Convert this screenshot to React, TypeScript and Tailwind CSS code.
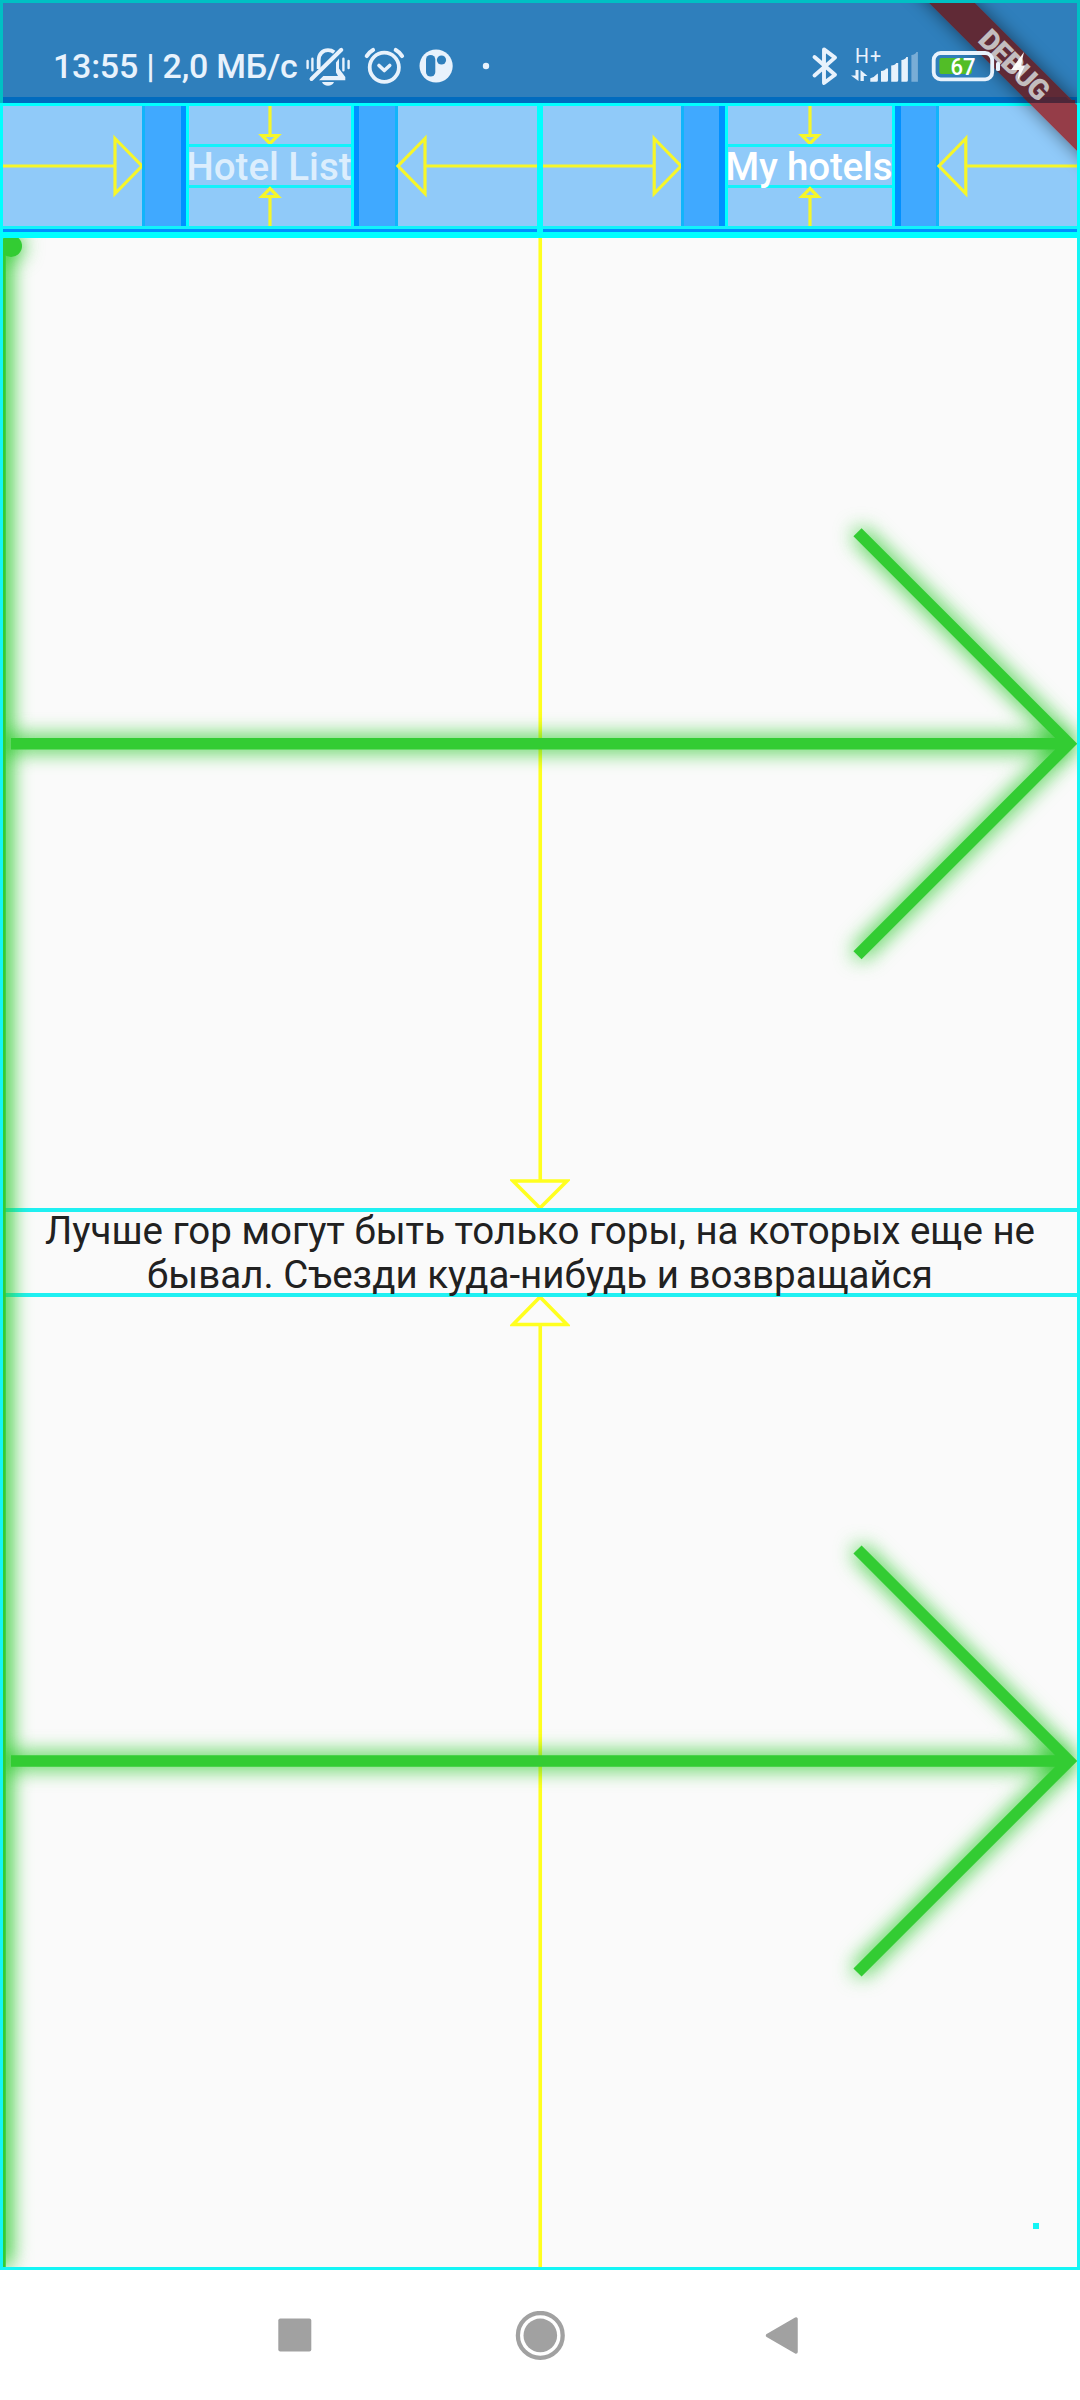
import React from "react";

function StatusIcons() {
  return (
    <svg className="h-[60px] w-[200px]" viewBox="300 36 200 60" fill="none" stroke="#e8f2fc">
      {/* muted bell */}
      <path d="M318.700 69V60c0-6 4-9.800 9.300-9.800 2.500 0 4.500.7 6.200 2" strokeWidth="3.800" />
      <path d="M311.500 79 341.300 49.800" strokeWidth="4" strokeLinecap="round" />
      <path d="M336 62.500 339 58.500v10l6.300 8.500v3.200H319l4.300-4.300H338l-2-3.500z" fill="#e8f2fc" stroke="none" />
      <path d="M307.600 61v7M312.400 58.800v11.400M343.400 58.800v11.400M348.600 61v7" strokeWidth="2.400" strokeLinecap="round" />
      <path d="M322 82h12c-1 2.500-3.300 3.800-6 3.800s-5-1.300-6-3.800z" fill="#e8f2fc" stroke="none" />
      {/* alarm */}
      <circle cx="384.300" cy="67.300" r="14.600" strokeWidth="3.800" />
      <path d="m379 65.500 5.300 5 5.400-5" strokeWidth="3.600" strokeLinecap="round" strokeLinejoin="round" />
      <path d="M366.800 56c1.500-2.500 3.500-4.500 6.200-6M395.800 50c2.700 1.500 4.700 3.500 6.200 6" strokeWidth="4.200" strokeLinecap="round" />
      {/* app badge */}
      <circle cx="436.100" cy="66" r="16.600" fill="#e8f2fc" stroke="none" />
      <rect x="426" y="55" width="9.300" height="21.500" rx="4.600" fill="#2f7fbc" stroke="none" />
      <circle cx="441.500" cy="60" r="4.600" fill="#2f7fbc" stroke="none" />
      <circle cx="486" cy="66" r="3.200" fill="#e8f2fc" stroke="none" />
    </svg>
  );
}

function SystemIcons() {
  return (
    <svg className="h-[60px] w-[220px]" viewBox="808 36 220 60" fill="none" stroke="#e8f2fc">
      <path d="m814.500 57 20.500 17.800-11 8.200V49.400l11 8.200L814.500 75.500" strokeWidth="3.900" strokeLinejoin="round" strokeLinecap="round" />
      <g fill="#e8f2fc" stroke="none">
        <text x="855" y="62.500" fontSize="19.500" fontFamily="Roboto, sans-serif" textLength="26">H+</text>
        <path d="M855.500 70h3v11l-7.500-5.500h4.500zM860.500 81V70l7 6h-3.700v5z" />
        <path d="M870.300 81.800v-3.500q4-1 7-4.600h.6v6.500q0 1.600-1.600 1.600zM881 81.800V71q4-.5 5-2.500h2v11.700q0 1.600-1.600 1.600zM891.200 81.800V65.500q4-.5 5-2.500h2v17.200q0 1.600-1.600 1.600zM901.400 81.800V60q4-.5 5-3h1.500v23.200q0 1.600-1.600 1.600z" />
        <path opacity=".4" d="M911.400 81.800V55q4-.5 5-3h1.500v29.800z" />
        <rect x="939.400" y="58" width="32.400" height="16" rx="2" fill="#52bd27" />
        <text x="950.500" y="75" fontSize="23" fontWeight="500" fontFamily="Roboto, sans-serif" textLength="25" lengthAdjust="spacingAndGlyphs" fill="#fff">67</text>
        <rect x="996" y="62" width="4" height="9" rx="1.500" />
        <path fill="#fff" d="m1024 52-13 18h8l-1.500 11 7.500-15.500h-4z" opacity=".95" />
      </g>
      <rect x="933.700" y="53" width="58.500" height="26.300" rx="7" strokeWidth="3.800" />
    </svg>
  );
}

function StatusBar() {
  return (
    <header className="relative h-[103px] border-x-[3px] border-t-[3px] border-[#00c0c4] bg-[#2f7fbc]">
      <div className="flex h-[94px] pl-[50px] pt-[33px]">
        <span className="mt-[10px] h-[40px] w-[247px] whitespace-nowrap font-['Roboto'] text-[34px] leading-[40px] font-medium tracking-[-0.25px] text-[#e8f2fc]">
          13:55 | 2,0 МБ/с
        </span>
        <StatusIcons />
      </div>
      <div className="h-[6px] bg-[#006bbf]" />
    </header>
  );
}

function ArrowCell({ flip = false }: { flip?: boolean }) {
  return (
    <div className="min-w-0 flex-1 bg-[#90caf9]">
      <svg className="h-[120px] w-full overflow-visible" viewBox="0 0 139 120" preserveAspectRatio="none" fill="none" stroke="#f6f62a" strokeWidth="3.200">
        <g transform={flip ? "translate(139 0) scale(-1 1)" : undefined}>
          <path d="M0 60h112M112 32.500 139 60l-27 27.500z" />
        </g>
      </svg>
    </div>
  );
}

function Tab({ label, active, band, dark, text }: { label: string; active: boolean; band: string; dark: string; text: string }) {
  return (
    <div className="flex h-[129px] w-[540px] flex-col border-x-[3px] border-t-[3px] border-[#00ffff] bg-[#90caf9]">
      <div className="flex h-[120px]">
        <ArrowCell />
        <div className="relative w-[3px] bg-[#12b4fa]" />
        <div className={`${band} bg-[#40a9ff]`} />
        <div className={`${dark} bg-[#0090ff]`} />
        <div className="w-[3px] bg-[#0ff]" />
        <div className={`${text} flex flex-col items-center`}>
          <svg className="h-[38px] w-[30px] overflow-visible" viewBox="0 0 30 38" fill="none" stroke="#f6f62a" strokeWidth="3.200">
            <path d="M15 0v29M7 29.500h16l-8 8z" />
          </svg>
          <div className="flex h-[44px] w-full items-center justify-center border-y-[3px] border-[#12f2fb]">
            <svg className="h-[44px] w-full overflow-visible" fill={active ? "#fff" : "#dceefd"}>
              <text x="-2.500" y="36" fontSize="38.500" fontWeight="500" fontFamily="Roboto, sans-serif" textLength={active ? 167 : 165} lengthAdjust="spacing">
                {label}
              </text>
            </svg>
          </div>
          <svg className="h-[38px] w-[30px] overflow-visible" viewBox="0 0 30 38" fill="none" stroke="#f6f62a" strokeWidth="3.200">
            <path d="M15 38V9M7 8.500h16l-8-8z" />
          </svg>
        </div>
        <div className="w-[3px] bg-[#0ff]" />
        <div className={`${dark} bg-[#0090ff]`} />
        <div className={`${band} bg-[#40a9ff]`} />
        <div className="w-[3px] bg-[#12b4fa]" />
        <ArrowCell flip />
      </div>
      <div className="h-[3px] bg-[#12f2fb]" />
      <div className="h-[3px] bg-[#0090ff]" />
    </div>
  );
}

function DebugRibbon() {
  return (
    <svg className="absolute right-[3px] top-[3px] h-[180px] w-[180px]" viewBox="897 3 180 180">
      <defs>
        <filter id="ribbonShadow" x="-30%" y="-30%" width="160%" height="160%">
          <feGaussianBlur stdDeviation="9" />
        </filter>
        <clipPath id="statusPart"><rect x="897" y="3" width="180" height="100" /></clipPath>
        <clipPath id="tabPart"><rect x="897" y="103" width="180" height="80" /></clipPath>
        <mask id="outside">
          <rect x="897" y="3" width="180" height="180" fill="#fff" />
          <path d="m906-20 200 200V134L952-20z" fill="#000" />
        </mask>
      </defs>
      <g mask="url(#outside)">
        <path d="m906-20 200 200V134L952-20z" fill="#000" opacity=".5" filter="url(#ribbonShadow)" />
      </g>
      <path d="m906-20 200 200V134L952-20z" fill="#602a36" clipPath="url(#statusPart)" />
      <path d="m906-20 200 200V134L952-20z" fill="#953d48" clipPath="url(#tabPart)" />
      <path d="m1023 97 6 6h46v-3h-6l-3-3z" fill="#4d2739" />
      <text x="1014.500" y="75" transform="rotate(45 1014.500 65)" textAnchor="middle" fontSize="28.500" fontWeight="900" fontFamily="Roboto, sans-serif" fill="#c3bdbf" textLength="87">
        DEBUG
      </text>
    </svg>
  );
}

function GreenArrow({ y }: { y: number }) {
  return <path d={`M11 ${y}H1069M857.500 ${y - 211.5} 1069 ${y} 857.500 ${y + 211.5}`} />;
}

function SliverOverlay() {
  return (
    <svg className="absolute inset-0 h-[2029px] w-[1074px]" viewBox="3 238 1074 2029">
      <defs>
        <filter id="glow" filterUnits="userSpaceOnUse" x="-60" y="150" width="1220" height="2200" colorInterpolationFilters="sRGB">
          <feGaussianBlur stdDeviation="10.500" />
          <feComponentTransfer>
            <feFuncA type="linear" slope="1.3" />
          </feComponentTransfer>
        </filter>
        <g id="marks" stroke="#33cc33" strokeWidth="11.500" fill="none" strokeLinejoin="miter">
          <path d="M0 246V2268" />
          <GreenArrow y={743.75} />
          <GreenArrow y={1761} />
          <circle cx="11" cy="246" r="11" fill="#33cc33" stroke="none" />
        </g>
      </defs>
      <g filter="url(#glow)">
        <use href="#marks" />
        <path d="M2 246V2262" stroke="#33cc33" strokeWidth="15" />
      </g>
      <use href="#marks" />
    </svg>
  );
}

function Content() {
  return (
    <main className="relative flex h-[2032px] flex-col items-center border-x-[3px] border-b-[3px] border-[#14f5f5] bg-[#fafafa]">
      <svg className="h-[970px] w-[60px]" viewBox="0 0 60 970" fill="none" stroke="#ffff1f" strokeWidth="3.600">
        <path d="M30.250 0v942M3 943h54L30 970z" />
      </svg>
      <div className="h-[89px] w-full border-y-[4px] border-[#1ff0f2] text-center">
        <svg className="h-[81px] w-full overflow-visible" viewBox="3 1212 1074 81" fill="#212121" fontSize="38.500" fontFamily="Roboto, sans-serif">
          <text x="45" y="1244" textLength="990">Лучше гор могут быть только горы, на которых еще не</text>
          <text x="147" y="1288" textLength="786">бывал. Съезди куда-нибудь и возвращайся</text>
        </svg>
      </div>
      <svg className="h-[970px] w-[60px]" viewBox="0 0 60 970" fill="none" stroke="#ffff1f" strokeWidth="3.600">
        <path d="M30.250 28v942M3 27.500h54L30 0z" />
      </svg>
      <SliverOverlay />
      <div className="absolute right-[38px] bottom-[38px] h-[6px] w-[6px] bg-[#14f5f5]" />
    </main>
  );
}

function NavBar() {
  return (
    <nav className="flex h-[130px] items-start bg-white pt-[41px]" aria-label="System navigation">
      <svg className="ml-[270px] h-[50px] w-[50px]" viewBox="270 2311 50 50">
        <rect x="278.300" y="2318.500" width="33" height="33" rx="2" fill="#a1a1a1" />
      </svg>
      <svg className="ml-[195px] h-[50px] w-[50px]" viewBox="515 2311 50 50">
        <circle cx="540.300" cy="2335.400" r="22.400" fill="none" stroke="#a1a1a1" strokeWidth="4.300" />
        <circle cx="540.300" cy="2335.400" r="16.800" fill="#a1a1a1" />
      </svg>
      <svg className="ml-[195px] h-[50px] w-[50px]" viewBox="760 2311 50 50">
        <path d="M767.500 2335.600 796 2319v33z" fill="#a1a1a1" stroke="#a1a1a1" strokeWidth="3.500" strokeLinejoin="round" />
      </svg>
    </nav>
  );
}

export default function App() {
  return (
    <div className="relative flex h-[2400px] w-[1080px] flex-col overflow-hidden bg-white">
      <StatusBar />
      <div className="flex h-[135px] border-b-[6px] border-[#0ff]">
        <Tab label="Hotel List" active={false} band="w-[36px]" dark="w-[5px]" text="w-[162px]" />
        <Tab label="My hotels" active band="w-[35px]" dark="w-[6px]" text="w-[164px]" />
      </div>
      <Content />
      <NavBar />
      <DebugRibbon />
      <div className="absolute left-[808px] top-[36px]">
        <SystemIcons />
      </div>
    </div>
  );
}
